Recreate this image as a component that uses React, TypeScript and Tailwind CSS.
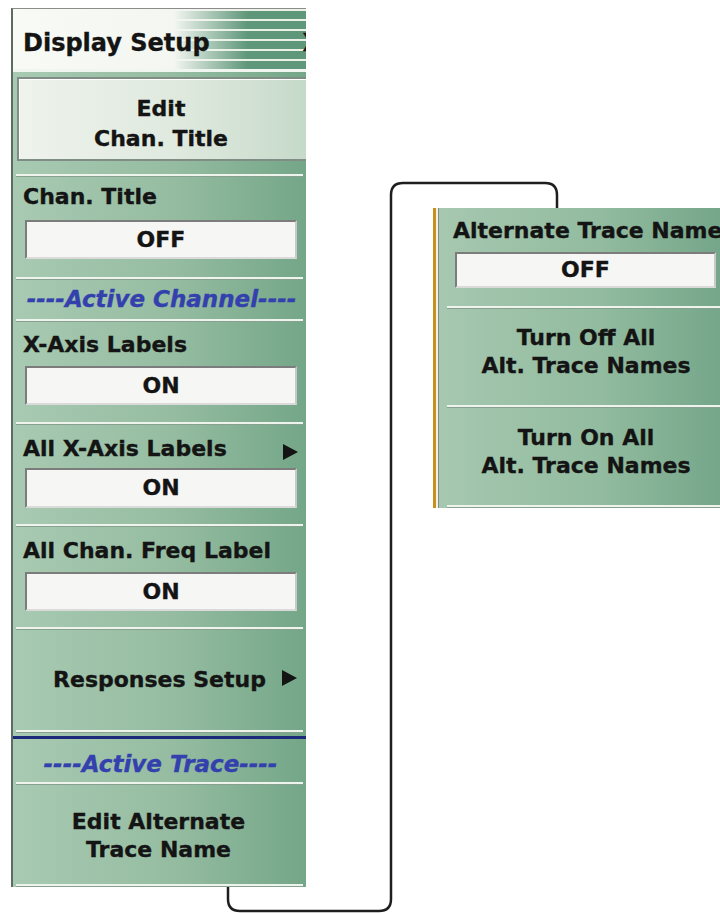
import React from "react";

function Sep() {
  return <div className="mx-[3px] h-[3px] shrink-0 border-b border-[#86a190] bg-[#eef3ec]" />;
}

function Tri() {
  return (
    <svg width="15" height="16" viewBox="0 0 15 16" className="shrink-0">
      <polygon points="0,0 15,8 0,16" fill="#141414" />
    </svg>
  );
}

function Field({ value, h = 39 }: { value: string; h?: number }) {
  return (
    <div
      className="flex items-center justify-center border-2 border-t-[#7c7c7c] border-l-[#7c7c7c] border-b-[#dadada] border-r-[#c9c9c9] bg-[#f6f6f4] text-[22px] leading-none text-[#141414]"
      style={{ height: h }}
    >
      {value}
    </div>
  );
}

export default function App() {
  return (
    <div className="relative flex h-[913px] w-[720px] overflow-hidden bg-white font-['DejaVu_Sans',sans-serif] font-bold text-[#141414] [-webkit-text-stroke:0.35px_#141414]">
      {/* Left panel */}
      <div className="ml-[11px] mt-[8px] flex h-[879px] w-[295px] shrink-0 flex-col overflow-hidden border-l-2 border-t border-l-[#5d6b62] border-t-[#8c8c8c] bg-[linear-gradient(90deg,#a8cab2_0%,#95bca1_55%,#74a688_100%)]">
        {/* Title bar */}
        <div className="flex h-[60px] shrink-0 items-center bg-[image:linear-gradient(90deg,#f8faf6_0%,#f3f6f1_55%,rgba(243,246,241,0)_80%),repeating-linear-gradient(180deg,#eaf1e7_0px,#eaf1e7_2px,#5f977a_2px,#5f977a_10px)] pl-[10px] pt-[8px]">
          <span className="text-[24px] leading-none">Display Setup</span>
          <span className="ml-auto mr-[-15px] text-[24px] leading-none">X</span>
        </div>
        {/* Button zone */}
        <div className="flex h-[105px] shrink-0 flex-col border-t-[3px] border-[#f2f6f0] pt-[5px]">
          <div className="ml-[4px] flex h-[84px] w-[300px] flex-col items-center justify-center border-2 border-[#7f8d84] bg-[linear-gradient(90deg,#eef3ec_0%,#dfe9de_55%,#c4d9c8_100%)] pr-[12px] pt-[9px] text-[22px] leading-[30px] shadow-[inset_1px_1px_0_#ffffff]">
            <span>Edit</span>
            <span>Chan. Title</span>
          </div>
        </div>
        <Sep />
        {/* Chan. Title */}
        <div className="flex h-[100px] shrink-0 flex-col pt-[7px]">
          <div className="h-[26px] pl-[10px] text-[22px] leading-[26px]">Chan. Title</div>
          <div className="ml-[12px] mt-[10px] w-[272px]">
            <Field value="OFF" />
          </div>
        </div>
        <Sep />
        <div className="flex h-[39px] shrink-0 items-center justify-center pl-[4px] text-[23px] italic text-[#3340ad] [-webkit-text-stroke:0.35px_#3340ad]">
          ----Active Channel----
        </div>
        <Sep />
        {/* X-Axis Labels */}
        <div className="flex h-[100px] shrink-0 flex-col pt-[10px]">
          <div className="h-[26px] pl-[10px] text-[22px] leading-[26px]">X-Axis Labels</div>
          <div className="ml-[12px] mt-[8px] w-[272px]">
            <Field value="ON" />
          </div>
        </div>
        <Sep />
        {/* All X-Axis Labels */}
        <div className="flex h-[99px] shrink-0 flex-col pt-[11px]">
          <div className="flex h-[26px] items-start justify-between pl-[10px] pr-[8px] text-[22px] leading-[26px]">
            <span>All X-Axis Labels</span>
            <span className="mt-[8px]">
              <Tri />
            </span>
          </div>
          <div className="ml-[12px] mt-[6px] w-[272px]">
            <Field value="ON" h={40} />
          </div>
        </div>
        <Sep />
        {/* All Chan. Freq Label */}
        <div className="flex h-[100px] shrink-0 flex-col pt-[11px]">
          <div className="h-[26px] pl-[10px] text-[22px] leading-[26px]">All Chan. Freq Label</div>
          <div className="ml-[12px] mt-[8px] w-[272px]">
            <Field value="ON" />
          </div>
        </div>
        <Sep />
        {/* Responses Setup */}
        <div className="relative flex h-[100px] shrink-0 items-center justify-center text-[22px] leading-none">
          <span>Responses Setup</span>
          <span className="absolute right-[9px] top-[40px]">
            <Tri />
          </span>
        </div>
        <Sep />
        <div className="h-[3px] shrink-0" />
        <div className="h-[3px] shrink-0 bg-[#1d2a7a]" />
        <div className="flex h-[43px] shrink-0 items-center justify-center pl-[2px] pt-[8px] text-[23px] italic leading-none text-[#3340ad] [-webkit-text-stroke:0.35px_#3340ad]">
          ----Active Trace----
        </div>
        <Sep />
        <div className="flex h-[99px] shrink-0 flex-col items-center justify-center pr-[2px] pt-[2px] text-[22px] leading-[28px]">
          <span>Edit Alternate</span>
          <span>Trace Name</span>
        </div>
        <Sep />
      </div>

      {/* Right panel */}
      <div className="ml-[127px] mt-[208px] flex h-[300px] w-[300px] shrink-0">
        <div className="w-[3px] bg-[#c8911e]" />
        <div className="w-[2px] bg-[#f7efe9]" />
        <div className="w-[1px] bg-[#7e8f84]" />
        <div className="flex flex-1 flex-col bg-[linear-gradient(90deg,#a6c8b0_0%,#92bb9f_55%,#72a487_100%)]">
          <div className="flex h-[98px] shrink-0 flex-col pt-[10px]">
            <div className="h-[26px] whitespace-nowrap pl-[14px] text-[22px] leading-[26px]">Alternate Trace Name</div>
            <div className="ml-[16px] mt-[8px] w-[261px]">
              <Field value="OFF" h={36} />
            </div>
          </div>
          <div className="ml-[8px] h-[3px] shrink-0 border-b border-[#86a190] bg-[#eef3ec]" />
          <div className="flex h-[96px] shrink-0 flex-col items-center pt-[15px] text-[22px] leading-[28px]">
            <span>Turn Off All</span>
            <span>Alt. Trace Names</span>
          </div>
          <div className="ml-[8px] h-[3px] shrink-0 border-b border-[#86a190] bg-[#eef3ec]" />
          <div className="flex h-[97px] shrink-0 flex-col items-center pt-[16px] text-[22px] leading-[28px]">
            <span>Turn On All</span>
            <span>Alt. Trace Names</span>
          </div>
          <div className="ml-[8px] h-[3px] shrink-0 border-b border-[#86a190] bg-[#eef3ec]" />
        </div>
      </div>

      {/* Connector */}
      <svg className="pointer-events-none absolute left-0 top-0" width="720" height="913" viewBox="0 0 720 913">
        <path
          d="M 228 887 V 899 Q 228 911 240 911 H 379 Q 391 911 391 899 V 195 Q 391 183 403 183 H 545 Q 557 183 557 195 V 208"
          fill="none"
          stroke="#1e1e1e"
          strokeWidth="2.5"
        />
      </svg>
    </div>
  );
}
